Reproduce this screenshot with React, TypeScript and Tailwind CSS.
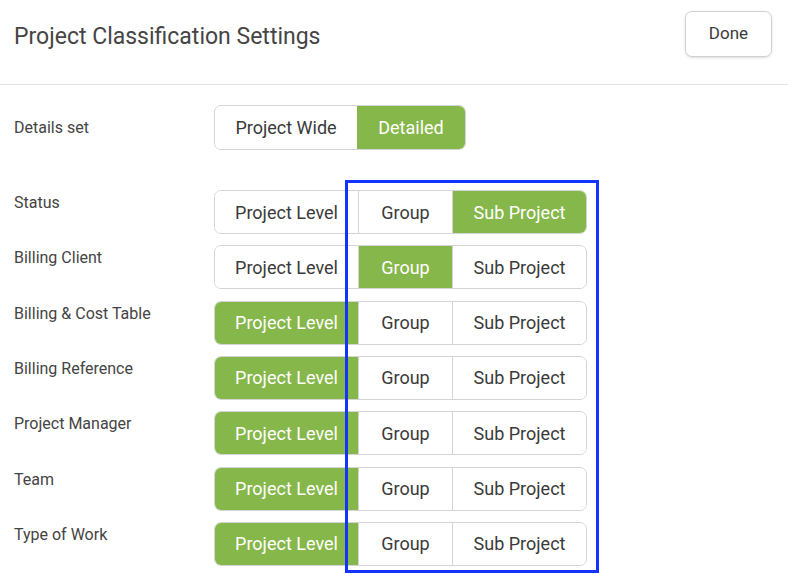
import React from 'react';

type Choice = 'Project Level' | 'Group' | 'Sub Project';

const rows: { label: string; value: Choice }[] = [
  { label: 'Status', value: 'Sub Project' },
  { label: 'Billing Client', value: 'Group' },
  { label: 'Billing & Cost Table', value: 'Project Level' },
  { label: 'Billing Reference', value: 'Project Level' },
  { label: 'Project Manager', value: 'Project Level' },
  { label: 'Team', value: 'Project Level' },
  { label: 'Type of Work', value: 'Project Level' },
];

const options: { name: Choice; width: string }[] = [
  { name: 'Project Level', width: 'w-[143px]' },
  { name: 'Group', width: 'w-[94px]' },
  { name: 'Sub Project', width: 'w-[134px]' },
];

function Segment({ value }: { value: Choice }) {
  return (
    <div className="flex h-[44px] rounded-[7px] border border-[#d4d4d4] overflow-hidden">
      {options.map((o, i) => {
        const active = o.name === value;
        return (
          <div
            key={o.name}
            className={`${o.width} flex items-center justify-center text-[18px] ${
              i > 0 ? 'border-l border-[#d4d4d4]' : ''
            } ${active ? 'bg-[#86b74a] text-white' : 'bg-white text-[#3a3a3a]'}`}
          >
            {o.name}
          </div>
        );
      })}
    </div>
  );
}

export default function App() {
  return (
    <div
      className="relative w-[788px] h-[574px] bg-white overflow-hidden"
      style={{ fontFamily: 'Roboto, "Open Sans", sans-serif' }}
    >
      {/* Header */}
      <div className="flex items-start justify-between h-[85px] pl-[14px] pr-[16px] pt-[11px] border-b border-[#e2e2e2]">
        <h1 className="mt-[3px] text-[23px] leading-[46px] text-[#454545]">Project Classification Settings</h1>
        <button className="h-[46px] w-[87px] rounded-[7px] border border-[#d0d0d0] text-[17px] text-[#3a3a3a] shadow-sm">
          Done
        </button>
      </div>

      {/* Details set */}
      <div className="flex items-center pl-[14px] mt-[20px]">
        <div className="w-[200px] text-[16px] text-[#444]">Details set</div>
        <div className="flex h-[45px] rounded-[7px] border border-[#d4d4d4] overflow-hidden">
          <div className="w-[142px] flex items-center justify-center text-[18px] text-[#3a3a3a] bg-white">
            Project Wide
          </div>
          <div className="w-[108px] flex items-center justify-center text-[18px] text-white bg-[#86b74a]">
            Detailed
          </div>
        </div>
      </div>

      {/* Rows */}
      <div className="flex flex-col gap-[11.33px] mt-[40px] pl-[14px]">
        {rows.map((r) => (
          <div key={r.label} className="flex">
            <div className="w-[200px] pt-[1px] text-[16px] text-[#444]">{r.label}</div>
            <Segment value={r.value} />
          </div>
        ))}
      </div>

      {/* Highlight annotation */}
      <div className="absolute left-[345px] top-[180px] w-[254px] h-[393px] border-[3px] border-[#1433ff]" />
    </div>
  );
}
